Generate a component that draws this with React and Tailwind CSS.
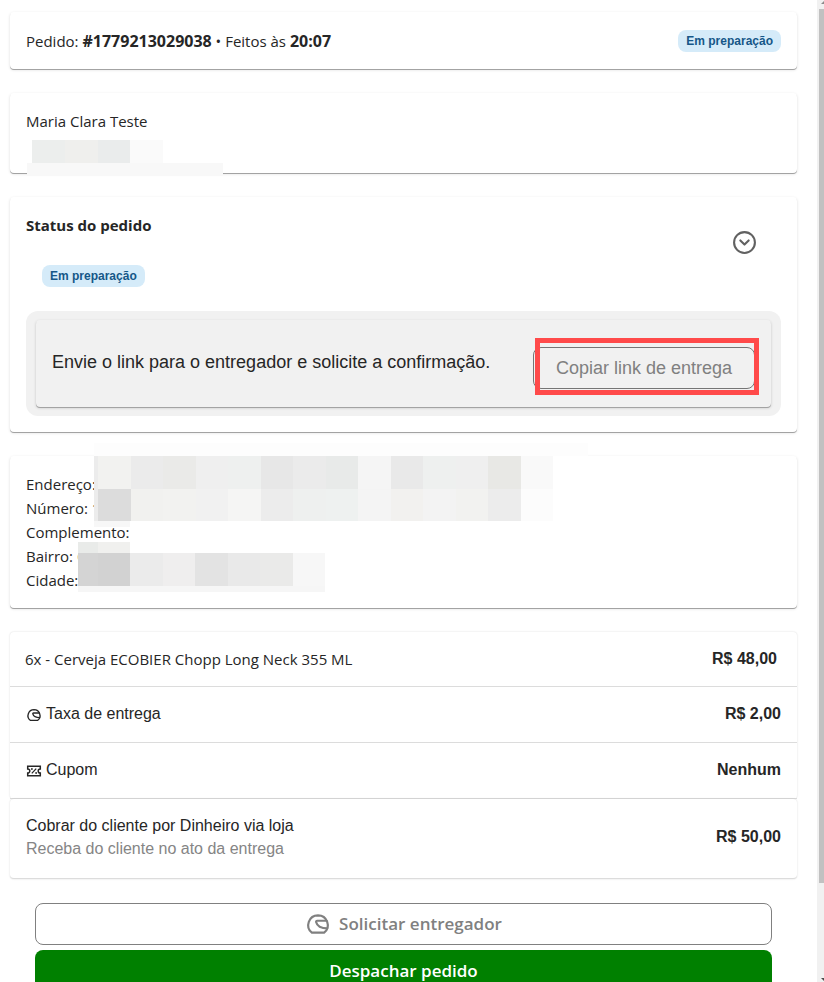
import React from 'react';
import { CircleChevronDown } from 'lucide-react';
import { TbHelmet } from 'react-icons/tb';

// Colours of the mosaic that hides the customer's data, one list per strip.
const ADDRESS_TOP = ['#f2f2f0', '#ebebeb', '#eaeae8', '#efefef', '#eef0ef', '#e7e7e7', '#ebebeb', '#e8eae9', '#f5f5f5', '#e9e9e9', '#eef0ef', '#efefef', '#e8e8e5', '#f9f9f9'];
const ADDRESS_BOTTOM = ['#dcdcdc', '#f1f1ef', '#f2f2f0', '#f1f1f1', '#f5f5f4', '#ececec', '#eef0ef', '#eef1f0', '#f4f4f4', '#f2f1ef', '#f3f3f3', '#f2f2f0', '#ececec', '#fcfcfc'];
const CITY = ['#d2d2d2', '#ebebeb', '#efeeee', '#e3e3e3', '#e9e9e9', '#eaeae9', '#f7f7f7'];
const PHONE = ['#eceeed', '#efefed', '#eaecec', '#fafafa'];

function Card({ children, className = '' }) {
  return (
    <section className={`relative rounded bg-white shadow-[0_1px_0_#a3a3a3,0_1px_3px_rgba(0,0,0,0.14)] ${className}`}>
      {children}
    </section>
  );
}

function Badge({ children }) {
  return (
    <span className="block w-fit rounded-lg bg-[#d5ebf9] px-2 font-['Liberation_Sans',sans-serif] text-xs leading-[22px] font-bold text-[#165788]">
      {children}
    </span>
  );
}

function Strip({ colors, className }) {
  return (
    <div className={`flex ${className}`}>
      {colors.map((c, i) => <span key={i} className="flex-1" style={{ backgroundColor: c }} />)}
    </div>
  );
}

function CouponIcon() {
  return (
    <svg width="16" height="16" viewBox="0 0 16 16" fill="none" stroke="currentColor" strokeWidth="1.5" aria-hidden="true">
      <path d="M1.7 3.2h12.6v2.7a2 2 0 0 0 0 4.2v2.7H1.7v-2.7a2 2 0 0 0 0-4.2z" />
      <path d="m5.8 10.4 4.4-4.8" strokeWidth="1.3" />
      <circle cx="5.9" cy="6" r=".9" fill="currentColor" stroke="none" />
      <circle cx="10.1" cy="10" r=".9" fill="currentColor" stroke="none" />
    </svg>
  );
}

function SummaryRow({ icon, label, value }) {
  return (
    <div className="flex h-14 items-center justify-between border-b border-[#dcdcdc] px-4 pb-0.5 font-['Liberation_Sans',sans-serif] text-base">
      <p className="flex items-center gap-1">
        <span className="pt-0.5">{icon}</span>
        {label}
      </p>
      <strong>{value}</strong>
    </div>
  );
}

export default function App() {
  return (
    <div className="flex h-screen overflow-hidden bg-white font-['Open_Sans','Noto_Sans',sans-serif] text-[15px] leading-6 text-[#262626]">
      <main className="h-full min-w-0 flex-1 overflow-hidden pt-3 pr-5 pl-2.5">
        <div className="flex flex-col gap-6">
          <Card className="flex h-[57px] items-center justify-between px-4">
            <p>
              Pedido: <strong className="text-base">#1779213029038</strong> • Feitos às <strong className="text-base">20:07</strong>
            </p>
            <Badge>Em preparação</Badge>
          </Card>

          <Card className="h-20 px-4 pt-4">
            <p>Maria Clara Teste</p>
            <div className="absolute top-[47px] left-[17px]">
              <Strip colors={PHONE} className="ml-[5px] h-[23px] w-[131px]" />
              <div className="h-[13px] w-[196px] bg-[#f8f8f8]" />
            </div>
          </Card>

          <Card className="p-4">
            <div className="flex items-center justify-between pr-6">
              <div>
                <h2 className="font-bold">Status do pedido</h2>
                <div className="pt-7 pl-4"><Badge>Em preparação</Badge></div>
              </div>
              <button type="button" aria-label="Expandir status" className="pb-4 text-[#616161]">
                <CircleChevronDown size={25} strokeWidth={2} />
              </button>
            </div>
            <div className="mt-6 rounded-xl bg-[#f1f1f1] px-2.5 py-[9px] font-['Liberation_Sans',sans-serif] text-lg">
              <div className="flex items-center justify-between rounded px-4 pt-[27px] pb-[18px] shadow-[0_1px_0_#a3a3a3,0_1px_3px_rgba(0,0,0,0.18)]">
                <p className="pb-3">Envie o link para o entregador e solicite a confirmação.</p>
                <div className="relative shrink-0">
                  <button type="button" className="h-[42px] w-[222px] rounded-lg border border-[#757575] text-[#808080]">
                    Copiar link de entrega
                  </button>
                  <div className="pointer-events-none absolute -top-[9px] -right-1 -bottom-1.5 left-0.5 border-5 border-[#ff4a4a]" />
                </div>
              </div>
            </div>
          </Card>

          <Card className="p-4">
            <p>Endereço:</p>
            <p>Número: 1</p>
            <p>Complemento:</p>
            <p>Bairro: C</p>
            <p>Cidade:</p>
            <div className="absolute -top-[13px] left-[84px]">
              <div className="h-[13px] w-[494px] bg-[#fdfdfd]" />
              <div className="flex">
                <div className="w-1 bg-[#ececec]" />
                <div>
                  <Strip colors={ADDRESS_TOP} className="h-[33px] w-[455px]" />
                  <Strip colors={ADDRESS_BOTTOM} className="h-8 w-[455px]" />
                </div>
              </div>
              <div className="h-1.5 w-9 bg-[#f7f7f7]" />
            </div>
            <div className="absolute top-[86px] left-[68px]">
              <div className="flex h-[11px]">
                <div className="w-5 bg-[#e9ebe9]" />
                <div className="w-8 bg-[#f0f0ee]" />
              </div>
              <div className="flex">
                <div className="w-5 bg-[#d4d4d4]" />
                <Strip colors={CITY} className="h-[33px] w-[227px]" />
              </div>
              <div className="h-1.5 bg-[#f6f6f6]" />
            </div>
          </Card>

          <div>
            <section className="rounded bg-white shadow-[0_0_2px_rgba(0,0,0,0.16)]">
              <div className="flex h-[55px] items-center justify-between border-b border-[#dcdcdc] pr-5 pl-[15px]">
                <p>6x - Cerveja ECOBIER Chopp Long Neck 355 ML</p>
                <strong className="font-['Liberation_Sans',sans-serif] text-base">R$ 48,00</strong>
              </div>
              <SummaryRow icon={<TbHelmet size={16} />} label="Taxa de entrega" value="R$ 2,00" />
              <SummaryRow icon={<CouponIcon />} label="Cupom" value="Nenhum" />
            </section>
            <section className="flex h-20 items-center justify-between rounded border-b border-[#dcdcdc] bg-white px-4 pb-1 font-['Liberation_Sans',sans-serif] text-base leading-[23px] shadow-[0_0_2px_rgba(0,0,0,0.16)]">
              <div>
                <p>Cobrar do cliente por Dinheiro via loja</p>
                <p className="text-[#858585]">Receba do cliente no ato da entrega</p>
              </div>
              <strong>R$ 50,00</strong>
            </section>
          </div>

          <div className="flex flex-col gap-[5px] px-[25px] text-[17px] font-semibold">
            <button type="button" className="flex h-[42px] items-center justify-center gap-2 rounded-lg border border-[#808080] text-[#808080]">
              <TbHelmet size={26} />
              Solicitar entregador
            </button>
            <button type="button" className="h-[42px] rounded-lg bg-[#008000] text-white">
              Despachar pedido
            </button>
          </div>
        </div>
      </main>

      <div aria-hidden="true" className="flex w-[7px] flex-col justify-between overflow-hidden bg-[#f1f1f1] pl-0.5">
        <svg width="9" height="9" viewBox="0 0 9 9" className="shrink-0"><path d="M2 4 5 1l3 3z" fill="#8b8b8b" /></svg>
        <div className="h-[89%] bg-[#c1c1c1]" />
        <div className="flex-1" />
        <svg width="9" height="5" viewBox="0 0 9 5" className="shrink-0"><path d="m2 1 3 3 3-3z" fill="#4d4d4d" /></svg>
      </div>
    </div>
  );
}
